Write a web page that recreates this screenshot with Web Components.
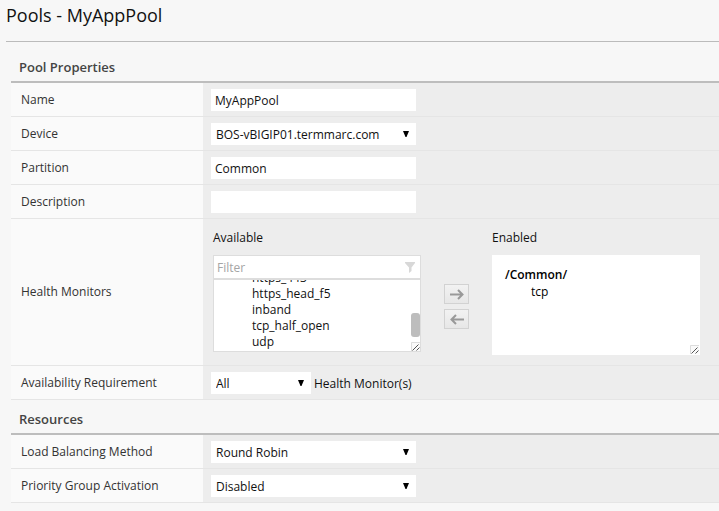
<!DOCTYPE html>
<html lang="en">
<head>
<meta charset="utf-8">
<meta name="viewport" content="width=device-width, initial-scale=1">
<title>Pools - MyAppPool</title>
<style>
  html { background: #f7f7f7; }
  body { margin: 0; font: 12px/16px "Open Sans", "Noto Sans", sans-serif; color: #111; }
</style>
</head>
<body>
<pool-page heading="Pools - MyAppPool">
  <property-section heading="Pool Properties">
    <text-row label="Name" value="MyAppPool"></text-row>
    <select-row label="Device" options="BOS-vBIGIP01.termmarc.com"></select-row>
    <text-row label="Partition" value="Common"></text-row>
    <text-row label="Description" value=""></text-row>
    <property-row label="Health Monitors"><monitor-picker></monitor-picker></property-row>
    <select-row label="Availability Requirement" options="All" size="short">Health Monitor(s)</select-row>
  </property-section>
  <property-section heading="Resources">
    <select-row label="Load Balancing Method" options="Round Robin"></select-row>
    <select-row label="Priority Group Activation" options="Disabled"></select-row>
  </property-section>
</pool-page>

<script>
const define = (name, render) => customElements.define(name, class extends HTMLElement {
  constructor() {
    super();
    this.attachShadow({ mode: 'open' });
  }
  connectedCallback() {
    if (!this.shadowRoot.firstChild) this.shadowRoot.innerHTML = render(this);
  }
});

const rowStyle = `
  * { box-sizing: border-box; }
  :host { display: grid; grid-template-columns: 192px minmax(0, 1fr); border-bottom: 1px solid #e5e5e5; background: #ededed; }
  .name { display: flex; align-items: center; padding: 0 10px; background: #fafafa; color: #333; }
  .value { display: flex; align-items: center; gap: 3px; min-height: 33px; padding: 0 8px; }
  input, select { width: 205px; height: 22px; margin: 0; border: 0; border-radius: 0; background: #fff; color: #111; font: inherit; }
`;

define('pool-page', el => `
  <style>
    :host { display: block; padding: 3px 0 8px 6px; }
    h1 { margin: 0; padding-bottom: 14px; border-bottom: 1px solid #bbb; font-size: 18px; line-height: 24px; font-weight: 400; color: #111; }
    main { padding: 6px 0 0 5px; }
  </style>
  <h1>${el.getAttribute('heading')}</h1>
  <main><slot></slot></main>`);

define('property-section', el => `
  <style>
    :host { display: block; }
    h2 { margin: 0; padding: 10px 8px 5px; border-bottom: 2px solid #bdbdbd; font-size: 13px; line-height: 18px; font-weight: 600; color: #444; }
  </style>
  <section><h2>${el.getAttribute('heading')}</h2><slot></slot></section>`);

define('property-row', el => `
  <style>${rowStyle}</style>
  <div class="name">${el.getAttribute('label')}</div>
  <div class="value"><slot></slot></div>`);

define('text-row', el => `
  <style>${rowStyle} input { padding: 2px 4px 0; }</style>
  <label class="name" for="control">${el.getAttribute('label')}</label>
  <div class="value"><input id="control" type="text" value="${el.getAttribute('value')}"></div>`);

define('select-row', el => `
  <style>${rowStyle}
    .pick { display: grid; align-items: center; }
    .pick > * { grid-area: 1 / 1; }
    select { appearance: none; padding: 2px 20px 0 5px; }
    :host([size="short"]) select { width: 100px; }
    svg { justify-self: end; margin-right: 7px; pointer-events: none; }
    .after { padding-top: 2px; }
  </style>
  <label class="name" for="control">${el.getAttribute('label')}</label>
  <div class="value">
    <div class="pick">
      <select id="control">${el.getAttribute('options').split('|').map(o => `<option>${o}</option>`).join('')}</select>
      <svg width="6" height="6" viewBox="0 0 6 6" aria-hidden="true"><path d="M0 0h6L3.5 6h-1z" fill="#000"/></svg>
    </div>
    <span class="after"><slot></slot></span>
  </div>`);

define('resize-grip', () => `
  <style>:host { display: block; width: 9px; height: 9px; } svg { display: block; }</style>
  <svg width="9" height="9" viewBox="0 0 9 9" aria-hidden="true">
    <path d="M0 0h9v9H0z" fill="#fafafa"/><path d="M.5 9V.5H9" fill="none" stroke="#ddd"/>
    <path d="M1.500 8.500l6-6M5.500 8.500l3-3" stroke="#555" fill="none"/>
  </svg>`);

define('monitor-picker', () => `
  <style>
    * { box-sizing: border-box; }
    :host { display: flex; gap: 23px; padding: 10px 2px; }
    .side { width: 208px; }
    .caption { margin: 0 0 9px; line-height: 17px; }
    .box { position: relative; background: #fff; }
    .available { border: 1px solid #ddd; }
    .filter { display: flex; align-items: center; height: 24px; padding-right: 5px; border-bottom: 2px solid #ddd; }
    input { flex: 1; min-width: 0; height: 22px; padding: 1px 3px 0; border: 0; background: none; color: #111; font: inherit; }
    input::placeholder { color: #a5a5a5; opacity: 1; }
    ul { margin: 0; padding: 0; list-style: none; }
    .list { display: flex; flex-direction: column; justify-content: flex-end; height: 71px; padding: 0 0 1px 38px; overflow: hidden; }
    .list li { flex: none; }
    .thumb { position: absolute; right: 0; bottom: 14px; width: 9px; height: 24px; border-radius: 3px; background: #bdbdbd; }
    resize-grip { position: absolute; right: 0; bottom: 0; }
    .enabled { height: 100px; padding: 11px 13px; }
    .enabled resize-grip { right: 1px; bottom: 1px; }
    .enabled li { line-height: 17px; color: #000; }
    .group { font-weight: 600; }
    .enabled ul ul { padding-left: 26px; font-weight: 400; }
    .moves { display: flex; flex-direction: column; gap: 5px; padding-top: 55px; }
    button { display: grid; place-items: center; width: 25px; height: 20px; padding: 0; border: 1px solid #d2d2d2; background: linear-gradient(#f2f2f2, #e7e7e7); }
  </style>
  <div class="side">
    <p class="caption" id="a">Available</p>
    <div class="box available">
      <div class="filter">
        <input type="text" placeholder="Filter" aria-label="Filter">
        <svg width="10" height="11" viewBox="0 0 10 11" aria-hidden="true"><path d="M0 0h10v1L6.500 5.500V9L4 11V5.500L0 1z" fill="#d8d8d8"/></svg>
      </div>
      <ul class="list" aria-labelledby="a"><li>https_443</li><li>https_head_f5</li><li>inband</li><li>tcp_half_open</li><li>udp</li></ul>
      <span class="thumb"></span><resize-grip></resize-grip>
    </div>
  </div>
  <div class="moves">
    <button type="button" aria-label="Enable monitor"><svg width="14" height="11" viewBox="0 0 14 11"><path d="M0 5.500h12.500M8 1l4.500 4.500L8 10" fill="none" stroke="#999" stroke-width="2"/></svg></button>
    <button type="button" aria-label="Disable monitor"><svg width="14" height="11" viewBox="0 0 14 11"><path d="M14 5.500H1.500M6 1L1.500 5.500L6 10" fill="none" stroke="#999" stroke-width="2"/></svg></button>
  </div>
  <div class="side">
    <p class="caption" id="e">Enabled</p>
    <div class="box enabled">
      <ul aria-labelledby="e"><li><span class="group">/Common/</span><ul><li>tcp</li></ul></li></ul>
      <resize-grip></resize-grip>
    </div>
  </div>`);
</script>
</body>
</html>
